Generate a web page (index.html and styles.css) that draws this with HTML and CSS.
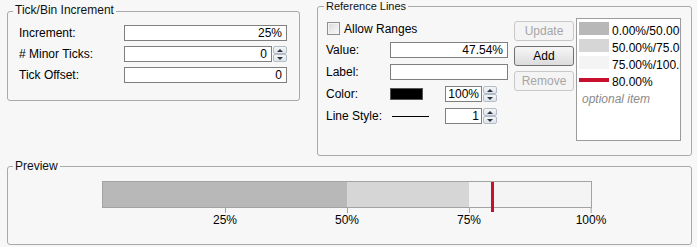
FILE: index.html
```html
<!DOCTYPE html>
<html lang="en">
<head>
    <meta charset="UTF-8">
    <meta name="viewport" content="width=device-width, initial-scale=1.0">
    <title>Axis Settings</title>
    <link rel="stylesheet" href="styles.css">
</head>
<body>
    <div class="top">
        <fieldset class="group tick">
            <legend>Tick/Bin Increment</legend>
            <div class="tick-form">
                <label>Increment:</label>
                <input class="box" type="text" value="25%">
                <label># Minor Ticks:</label>
                <div class="spin-field">
                    <input class="box" type="text" value="0">
                    <span class="spin"><span class="up"></span><span class="down"></span></span>
                </div>
                <label>Tick Offset:</label>
                <input class="box" type="text" value="0">
            </div>
        </fieldset>

        <fieldset class="group ref">
            <legend>Reference Lines</legend>
            <div class="ref-body">
                <div class="ref-form">
                    <div class="check-row">
                        <span class="check"></span>
                        <span>Allow Ranges</span>
                    </div>
                    <div class="ref-grid">
                        <label>Value:</label>
                        <input class="box" type="text" value="47.54%">
                        <label>Label:</label>
                        <input class="box" type="text" value="">
                        <label>Color:</label>
                        <div class="cell">
                            <span class="swatch"></span>
                            <div class="spin-field small after-swatch">
                                <input class="box" type="text" value="100%">
                                <span class="spin"><span class="up"></span><span class="down"></span></span>
                            </div>
                        </div>
                        <label>Line Style:</label>
                        <div class="cell">
                            <span class="line-sample"></span>
                            <div class="spin-field small after-line">
                                <input class="box" type="text" value="1">
                                <span class="spin"><span class="up"></span><span class="down"></span></span>
                            </div>
                        </div>
                    </div>
                </div>
                <div class="buttons">
                    <button class="btn" disabled>Update</button>
                    <button class="btn">Add</button>
                    <button class="btn" disabled>Remove</button>
                </div>
                <div class="list">
                    <div class="item"><span class="sw s1"></span><span class="txt">0.00%/50.00%</span></div>
                    <div class="item"><span class="sw s2"></span><span class="txt">50.00%/75.00%</span></div>
                    <div class="item"><span class="sw s3"></span><span class="txt">75.00%/100.00%</span></div>
                    <div class="item"><span class="sw red"></span><span class="txt">80.00%</span></div>
                    <div class="item"><span class="optional">optional item</span></div>
                </div>
            </div>
        </fieldset>
    </div>

    <fieldset class="group preview">
        <legend>Preview</legend>
        <div class="chart">
            <div class="bar">
                <span class="seg s1" style="width: 50%"></span>
                <span class="seg s2" style="width: 25%"></span>
                <span class="seg s3" style="width: 25%"></span>
                <span class="marker" style="left: calc(80% - 2px)"></span>
            </div>
            <div class="axis">
                <div class="axis-tick" style="left: 25%"><span class="axis-line"></span><span>25%</span></div>
                <div class="axis-tick" style="left: 50%"><span class="axis-line"></span><span>50%</span></div>
                <div class="axis-tick" style="left: 75%"><span class="axis-line"></span><span>75%</span></div>
                <div class="axis-tick" style="left: 100%"><span class="axis-line"></span><span>100%</span></div>
            </div>
        </div>
    </fieldset>
</body>
</html>
```

FILE: styles.css
```css
body {
    margin: 0;
    background-color: #f7f7f7;
    font-family: "Liberation Sans", Arial, sans-serif;
    font-size: 12px;
    color: #000;
}

.top {
    display: flex;
    align-items: flex-start;
    gap: 17px;
    padding-left: 7px;
}

.group {
    box-sizing: border-box;
    min-width: 0;
    margin: 0;
    padding: 0 0 0 6px;
    border: 1px solid #a9a9a9;
    border-radius: 3px;
}

.group legend {
    padding: 0 2px;
    color: #111;
}

/* tick / bin */
.tick {
    width: 293px;
    margin-top: 3px;
    padding-top: 5px;
    padding-bottom: 17px;
}

.tick legend {
    line-height: 14px;
    padding-bottom: 3px;
    margin-left: -1px;
}

.tick-form {
    display: grid;
    grid-template-columns: 105px 163px;
    grid-auto-rows: 16px;
    row-gap: 5px;
    align-items: center;
    margin-left: 5px;
}

.box {
    box-sizing: border-box;
    width: 100%;
    height: 16px;
    margin: 0;
    padding: 0 4px;
    border: 1px solid #7f7f7f;
    background-color: #fff;
    font: inherit;
    color: #000;
    text-align: right;
    outline: none;
}

.spin-field {
    display: flex;
    gap: 1px;
    height: 16px;
}

.spin-field .box {
    flex: 1;
    min-width: 0;
}

.spin-field.small .box {
    padding: 0 2px 0 1px;
}

.spin {
    display: flex;
    flex-direction: column;
    width: 14px;
    flex: none;
}

.spin span {
    box-sizing: border-box;
    height: 8px;
    border: 1px solid #b3bcc7;
    border-radius: 2px;
    background: linear-gradient(#f4f6f8, #dfe4ea);
    display: flex;
    align-items: center;
    justify-content: center;
}

.spin .up::after,
.spin .down::after {
    content: "";
    border-left: 3px solid transparent;
    border-right: 3px solid transparent;
}

.spin .up::after {
    border-bottom: 3px solid #2c3440;
}

.spin .down::after {
    border-top: 3px solid #2c3440;
}

/* reference lines */
.ref {
    width: 375px;
    padding-top: 5px;
    padding-right: 10px;
    padding-bottom: 14px;
}

.ref legend {
    font-size: 11px;
    line-height: 11px;
    padding: 1px 2px;
}

.ref-body {
    display: flex;
}

.ref-form {
    width: 182px;
    margin: 3px 0 0 2px;
}

.check-row {
    display: flex;
    align-items: center;
    gap: 4px;
    height: 15px;
    margin: 0 0 6px 1px;
}

.check {
    box-sizing: border-box;
    width: 13px;
    height: 13px;
    border: 1px solid #8f8f8f;
    background: linear-gradient(135deg, #d9d9d9, #fafafa);
    box-shadow: inset 0 0 0 1px #f3f3f3;
}

.ref-grid {
    display: grid;
    grid-template-columns: 64px 118px;
    grid-auto-rows: 16px;
    row-gap: 6px;
    align-items: center;
}

.cell {
    display: flex;
    align-items: center;
}

.swatch {
    box-sizing: border-box;
    width: 33px;
    height: 12px;
    border: 1px solid #555;
    background-color: #000;
}

.line-sample {
    width: 37px;
    height: 1px;
    margin-left: 2px;
    background-color: #000;
}

.spin-field.small {
    width: 52px;
}

.after-swatch {
    margin-left: 22px;
}

.after-line {
    margin-left: 16px;
}

.buttons {
    display: flex;
    flex-direction: column;
    gap: 5px;
    width: 60px;
    margin: 3px 0 0 6px;
}

.btn {
    box-sizing: border-box;
    height: 20px;
    padding: 0;
    border: 1px solid #707070;
    border-radius: 3px;
    background: linear-gradient(#f7f7f7, #dcdcdc);
    font: inherit;
    color: #000;
}

.btn:disabled {
    border-color: #c8c8c8;
    background: #f4f4f4;
    color: #a6a6a6;
}

.list {
    box-sizing: border-box;
    width: 105px;
    height: 123px;
    margin-left: 2px;
    padding: 3px 0 0 2px;
    border: 1px solid #9c9c9c;
    background-color: #fff;
    overflow: hidden;
}

.item {
    display: flex;
    align-items: flex-start;
    height: 17px;
    white-space: nowrap;
}

.sw {
    flex: none;
    width: 30px;
    height: 13px;
    margin-right: 3px;
}

.sw.red {
    height: 4px;
    margin-top: 5px;
    background-color: #c8102e;
}

.txt,
.optional {
    line-height: 15px;
    padding-top: 2px;
}

.optional {
    padding-left: 3px;
    color: #8a8a8a;
    font-style: italic;
}

.s1 { background-color: #b8b8b8; }
.s2 { background-color: #d6d6d6; }
.s3 { background-color: #f4f4f4; }

/* preview */
.preview {
    width: 685px;
    margin: 3px 0 0 7px;
    padding-top: 7px;
    padding-bottom: 16px;
}

.preview legend {
    line-height: 15px;
    margin-left: -1px;
}

.chart {
    width: 490px;
    margin-left: 88px;
}

.bar {
    position: relative;
    display: flex;
    box-sizing: border-box;
    height: 27px;
    border: 1px solid #a3a3a3;
}

.marker {
    position: absolute;
    top: 0;
    width: 3px;
    height: 30px;
    background-color: #c8102e;
}

.axis {
    position: relative;
    height: 20px;
    margin: 0 1px;
}

.axis-tick {
    position: absolute;
    top: 0;
    display: flex;
    flex-direction: column;
    align-items: center;
    transform: translateX(-50%);
    line-height: 14px;
}

.axis-line {
    width: 1px;
    height: 5px;
    background-color: #a3a3a3;
}
```
